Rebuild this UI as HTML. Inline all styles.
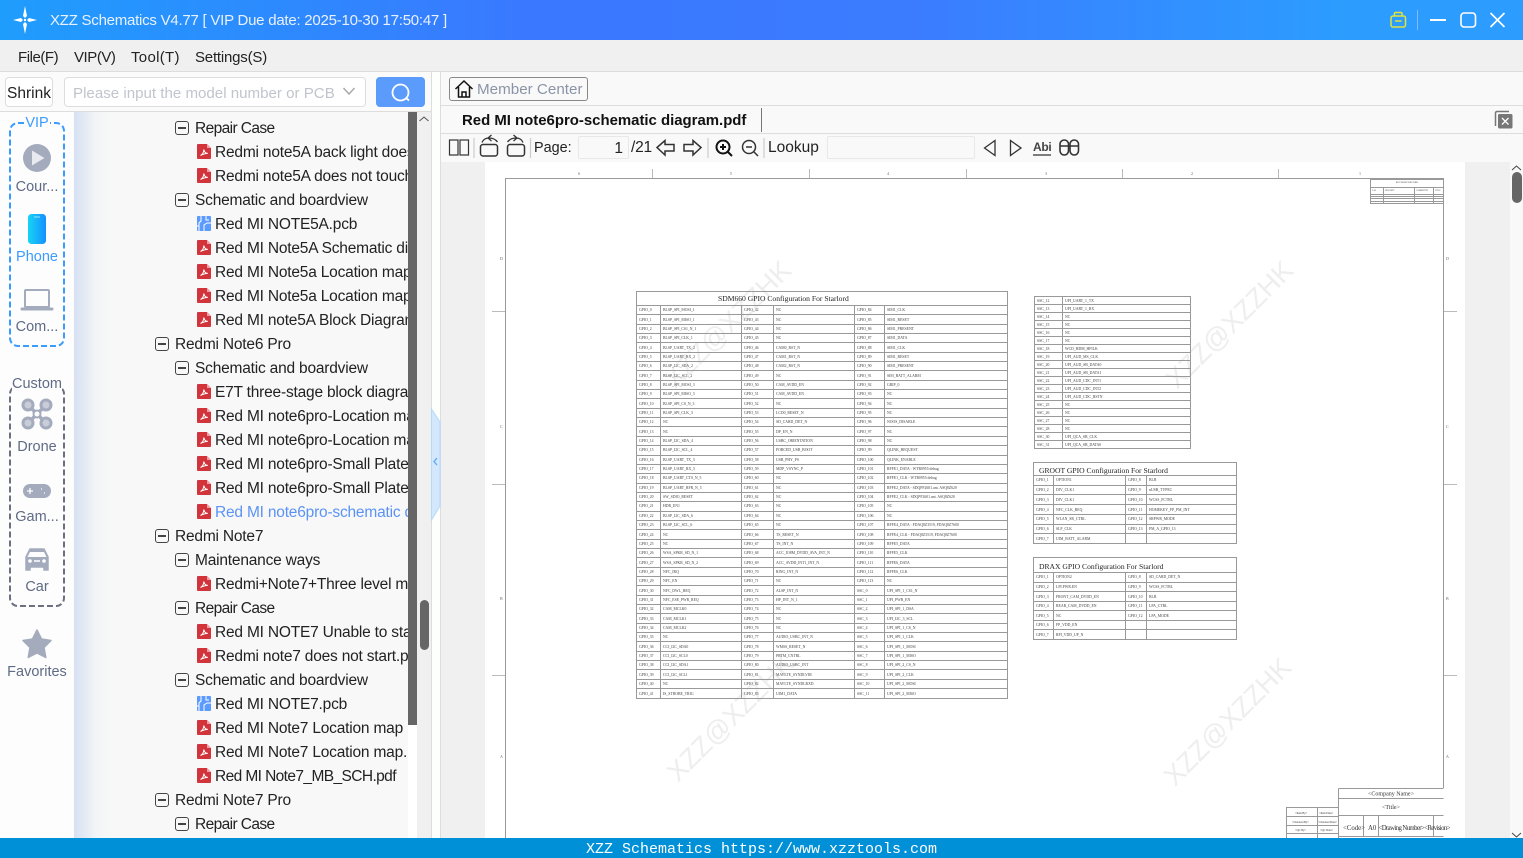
<!DOCTYPE html>
<html><head><meta charset="utf-8"><title>XZZ Schematics</title>
<style>
html,body{margin:0;padding:0;width:1523px;height:858px;overflow:hidden;background:#fff;font-family:"Liberation Sans","Noto Sans CJK SC",sans-serif;color:#222}
.a{position:absolute}
#title{left:0;top:0;width:1523px;height:40px;background:linear-gradient(90deg,#1f9dfd 0,#3a78ff 35%,#3b7cff 60%,#2c9cff 88%,#2c9cff 100%)}
#title span{position:absolute;left:50px;top:12px;color:#e8f1ff;font-size:15px;letter-spacing:-.24px;white-space:nowrap}
#menu{left:0;top:40px;width:1523px;height:31px;background:#f0f0f0;border-bottom:1px solid #ddd}
#menu span{position:absolute;top:9px;font-size:15px;color:#222}
#tree{left:74px;top:113px;width:334px;height:725px;overflow:hidden}
.r{position:absolute;height:24px;line-height:24px;font-size:15.5px;letter-spacing:-.2px;white-space:nowrap;color:#222;margin-top:1px}
.s{position:absolute;width:12px;height:12px;border:1.3px solid #444;border-radius:3px;box-sizing:content-box}
.s:after{content:"";position:absolute;left:2px;right:2px;top:5.4px;height:1.3px;background:#444}
.lab{position:absolute;width:74px;left:0;text-align:center;font-size:14.5px;color:#5f6b85;white-space:nowrap}
table{position:absolute;border-collapse:collapse;table-layout:fixed;font-family:"Liberation Serif",serif;font-size:3.8px;color:#444;background:#fff;filter:blur(.25px)}
td{border:1px solid #999;padding:2px 0 0 2px;white-space:nowrap;overflow:hidden;line-height:1}
td.t{font-size:7.6px;color:#222;text-align:left;padding:3px 0 0 5px}
</style></head><body>
<div class="a" id="title">
<svg class="a" style="left:10px;top:5px" width="30" height="30" viewBox="0 0 30 30"><path d="M15 1 L17 11 L15 13 L13 11Z M15 29 L17 19 L15 17 L13 19Z M3 15 L11 13 L13 15 L11 17Z M27 15 L19 13 L17 15 L19 17Z" fill="#fff"/><circle cx="15" cy="15" r="1.2" fill="#fff"/></svg>
<span>XZZ Schematics V4.77 [ VIP Due date: 2025-10-30 17:50:47 ]</span>
<svg class="a" style="left:1380px;top:0" width="143" height="40" fill="none"><rect x="11" y="16" width="14.5" height="11" rx="2" stroke="#e2e23a" stroke-width="1.5"/><path d="M14.5 16v-2.5a1 1 0 0 1 1-1h5.500a1 1 0 0 1 1 1V16M15 21h6.500" stroke="#e2e23a" stroke-width="1.500"/><path d="M37.500 10v20" stroke="#7fbcff"/><path d="M50 20h16" stroke="#fff" stroke-width="2"/><rect x="81" y="13" width="14.500" height="14" rx="3" stroke="#fff" stroke-width="1.600"/><path d="M110.500 13l14 14M124.500 13l-14 14" stroke="#fff" stroke-width="1.600"/></svg>
</div>
<div class="a" id="menu"><span style="left:18px;letter-spacing:-.45px">File(F)</span><span style="left:74px;letter-spacing:-.45px">VIP(V)</span><span style="left:131px;letter-spacing:.3px">Tool(T)</span><span style="left:195px;letter-spacing:-.2px">Settings(S)</span></div>

<!-- search row -->
<div class="a" style="left:0;top:72px;width:431px;height:39px;background:#fbfbfb;border-bottom:1px solid #ddd"></div>
<div class="a" style="left:5px;top:77px;width:46px;height:28px;border:1px solid #ddd;border-radius:4px;background:#fff;font-size:15.500px;line-height:31px;text-align:center">Shrink</div>
<div class="a" style="left:64px;top:77px;width:300px;height:28px;border:1px solid #ddd;border-radius:4px;background:#fff;font-size:15.100px;line-height:31px;color:#c0c4cc;text-indent:8px;white-space:nowrap">Please input the model number or PCB</div>
<svg class="a" style="left:340px;top:85px" width="18" height="14" fill="none"><path d="M3.500 3l5.500 6 5.500-6" stroke="#aaa" stroke-width="1.500"/></svg>
<div class="a" style="left:376px;top:77px;width:49px;height:30px;background:#5a9bfb;border-radius:4px"></div>
<svg class="a" style="left:376px;top:77px" width="49" height="30" fill="none"><circle cx="24.500" cy="15.500" r="8" stroke="#fff" stroke-width="1.800"/><path d="M30 21l3 2.500" stroke="#fff" stroke-width="1.800"/></svg>

<!-- sidebar -->
<div class="a" style="left:0;top:112px;width:74px;height:726px;background:#fdfdfd"></div>
<svg class="a" style="left:0;top:112px" width="74" height="726" fill="none">
<rect x="10" y="11" width="54" height="223" rx="8" stroke="#3a9cff" stroke-width="2" stroke-dasharray="6 3"/>
<rect x="10" y="274" width="54" height="220" rx="8" stroke="#6b7080" stroke-width="2" stroke-dasharray="6 3"/>
<circle cx="37" cy="46" r="14" fill="#a3abbd"/><path d="M32 38.500v15l12.500-7.500z" fill="#e8eaef"/>
<defs><linearGradient id="ph" x1="0" x2="1"><stop offset="0" stop-color="#17d4f5"/><stop offset="1" stop-color="#1490ff"/></linearGradient></defs>
<rect x="28" y="102" width="18" height="30" rx="3.500" fill="url(#ph)"/><path d="M34 105h6" stroke="#9de6ff"/>
<rect x="25" y="178" width="24" height="17" rx="1" stroke="#a3abbd" stroke-width="2"/><path d="M22 197h30" stroke="#a3abbd" stroke-width="3" stroke-linecap="round"/>
<path d="M28 293l18 18M46 293l-18 18" stroke="#a3abbd" stroke-width="3.500"/>
<circle cx="28" cy="293" r="5" fill="#c9cdd8" stroke="#a3abbd" stroke-width="3"/><circle cx="46" cy="293" r="5" fill="#c9cdd8" stroke="#a3abbd" stroke-width="3"/><circle cx="28" cy="311" r="5" fill="#c9cdd8" stroke="#a3abbd" stroke-width="3"/><circle cx="46" cy="311" r="5" fill="#c9cdd8" stroke="#a3abbd" stroke-width="3"/><circle cx="37" cy="302" r="3.500" fill="#fff" stroke="#a3abbd" stroke-width="2"/>
<rect x="23" y="372" width="28" height="14" rx="7" fill="#a3abbd"/><path d="M27 379h6M30 376v6M41 377h1M44 381h1" stroke="#fff" stroke-width="1.300"/>
<path d="M30 437h14l4 8v13h-4v-3H30v3h-4v-13z" fill="#a3abbd" stroke="#a3abbd" stroke-width="1.500" stroke-linejoin="round"/><path d="M30 440h14l2.500 5h-19z" fill="#fdfdfd"/><circle cx="30" cy="449" r="1.800" fill="#fff"/><circle cx="44" cy="449" r="1.800" fill="#fff"/><path d="M34 449h6" stroke="#fff" stroke-width="1.500"/>
<path d="M37 518l4.500 9 9.500 1.500-7 7 1.800 10L37 541l-8.800 4.500 1.800-10-7-7 9.500-1.500z" fill="#a3abbd" stroke="#a3abbd" stroke-width="1.500" stroke-linejoin="round"/>
</svg>
<div class="lab" style="top:115px;color:#3a9cff"><span style="background:#fdfdfd;padding:0 1px">VIP</span></div>
<div class="lab" style="top:179px">Cour...</div>
<div class="lab" style="top:249px;color:#3a9cff">Phone</div>
<div class="lab" style="top:319px">Com...</div>
<div class="lab" style="top:376px"><span style="background:#fdfdfd">Custom</span></div>
<div class="lab" style="top:439px">Drone</div>
<div class="lab" style="top:509px">Gam...</div>
<div class="lab" style="top:579px">Car</div>
<div class="lab" style="top:664px">Favorites</div>

<!-- tree -->
<div class="a" style="left:74px;top:112px;width:334px;height:726px;background:linear-gradient(90deg,#d6e1f2 0,#f3f4f6 22px,#f8f8f8 40px)"></div>
<div class="a" id="tree">
<svg width="0" height="0" style="position:absolute"><defs>
<g id="pdf"><path d="M1 0h9l4 4v10a1 1 0 0 1-1 1H1a1 1 0 0 1-1-1V1a1 1 0 0 1 1-1z" fill="#d2343c"/><path d="M10 0v4h4z" fill="#f0a0a4"/><path d="M3.500 11.500c2-1 3.200-3.500 3.300-6 .5 2.500 2 3.800 4 3.900-2.700.1-5 .8-7.300 2.100z" fill="none" stroke="#fff" stroke-width="1"/></g>
<g id="pcb"><rect width="14" height="15" rx="1" fill="#5b9bff"/><path d="M4 0v5l-2 2v8M9 0v4h3M7 15V9l3-2h4M0 10h2" stroke="#fff" fill="none" stroke-width="1"/></g>
</defs></svg>
<div class="s" style="left:101px;top:8px"></div><div class="r" style="left:121px;top:3px;letter-spacing:-.6px">Repair Case</div>
<svg class="a" style="left:123px;top:31px" width="14" height="15"><use href="#pdf"/></svg><div class="r" style="left:141px;top:27px">Redmi note5A back light doesn't work</div>
<svg class="a" style="left:123px;top:55px" width="14" height="15"><use href="#pdf"/></svg><div class="r" style="left:141px;top:51px">Redmi note5A does not touch screen</div>
<div class="s" style="left:101px;top:80px"></div><div class="r" style="left:121px;top:75px">Schematic and boardview</div>
<svg class="a" style="left:123px;top:103px" width="14" height="15"><use href="#pcb"/></svg><div class="r" style="left:141px;top:99px">Red MI NOTE5A.pcb</div>
<svg class="a" style="left:123px;top:127px" width="14" height="15"><use href="#pdf"/></svg><div class="r" style="left:141px;top:123px">Red MI Note5A Schematic diagram.pdf</div>
<svg class="a" style="left:123px;top:151px" width="14" height="15"><use href="#pdf"/></svg><div class="r" style="left:141px;top:147px">Red MI Note5a Location map top.pdf</div>
<svg class="a" style="left:123px;top:175px" width="14" height="15"><use href="#pdf"/></svg><div class="r" style="left:141px;top:171px">Red MI Note5a Location map bot.pdf</div>
<svg class="a" style="left:123px;top:199px" width="14" height="15"><use href="#pdf"/></svg><div class="r" style="left:141px;top:195px">Red MI note5A Block Diagram.pdf</div>
<div class="s" style="left:81px;top:224px"></div><div class="r" style="left:101px;top:219px">Redmi Note6 Pro</div>
<div class="s" style="left:101px;top:248px"></div><div class="r" style="left:121px;top:243px">Schematic and boardview</div>
<svg class="a" style="left:123px;top:271px" width="14" height="15"><use href="#pdf"/></svg><div class="r" style="left:141px;top:267px">E7T three-stage block diagram.pdf</div>
<svg class="a" style="left:123px;top:295px" width="14" height="15"><use href="#pdf"/></svg><div class="r" style="left:141px;top:291px">Red MI note6pro-Location map.pdf</div>
<svg class="a" style="left:123px;top:319px" width="14" height="15"><use href="#pdf"/></svg><div class="r" style="left:141px;top:315px">Red MI note6pro-Location map.pdf</div>
<svg class="a" style="left:123px;top:343px" width="14" height="15"><use href="#pdf"/></svg><div class="r" style="left:141px;top:339px">Red MI note6pro-Small Plate.pdf</div>
<svg class="a" style="left:123px;top:367px" width="14" height="15"><use href="#pdf"/></svg><div class="r" style="left:141px;top:363px">Red MI note6pro-Small Plate.pdf</div>
<svg class="a" style="left:123px;top:391px" width="14" height="15"><use href="#pdf"/></svg><div class="r" style="left:141px;top:387px;color:#5b93f5">Red MI note6pro-schematic diagram.pdf</div>
<div class="s" style="left:81px;top:416px"></div><div class="r" style="left:101px;top:411px">Redmi Note7</div>
<div class="s" style="left:101px;top:440px"></div><div class="r" style="left:121px;top:435px">Maintenance ways</div>
<svg class="a" style="left:123px;top:463px" width="14" height="15"><use href="#pdf"/></svg><div class="r" style="left:141px;top:459px">Redmi+Note7+Three level maintenance</div>
<div class="s" style="left:101px;top:488px"></div><div class="r" style="left:121px;top:483px;letter-spacing:-.6px">Repair Case</div>
<svg class="a" style="left:123px;top:511px" width="14" height="15"><use href="#pdf"/></svg><div class="r" style="left:141px;top:507px">Red MI NOTE7 Unable to start up</div>
<svg class="a" style="left:123px;top:535px" width="14" height="15"><use href="#pdf"/></svg><div class="r" style="left:141px;top:531px">Redmi note7 does not start.pdf</div>
<div class="s" style="left:101px;top:560px"></div><div class="r" style="left:121px;top:555px">Schematic and boardview</div>
<svg class="a" style="left:123px;top:583px" width="14" height="15"><use href="#pcb"/></svg><div class="r" style="left:141px;top:579px">Red MI NOTE7.pcb</div>
<svg class="a" style="left:123px;top:607px" width="14" height="15"><use href="#pdf"/></svg><div class="r" style="left:141px;top:603px">Red MI Note7 Location map</div>
<svg class="a" style="left:123px;top:631px" width="14" height="15"><use href="#pdf"/></svg><div class="r" style="left:141px;top:627px">Red MI Note7 Location map.</div>
<svg class="a" style="left:123px;top:655px" width="14" height="15"><use href="#pdf"/></svg><div class="r" style="left:141px;top:651px;letter-spacing:-.6px">Red MI Note7_MB_SCH.pdf</div>
<div class="s" style="left:81px;top:680px"></div><div class="r" style="left:101px;top:675px">Redmi Note7 Pro</div>
<div class="s" style="left:101px;top:704px"></div><div class="r" style="left:121px;top:699px;letter-spacing:-.6px">Repair Case</div>
</div>
<!-- tree scrollbars -->
<div class="a" style="left:408px;top:112px;width:9px;height:613px;background:#666"></div>
<div class="a" style="left:417px;top:112px;width:14px;height:726px;background:#f0f0f0"></div>
<div class="a" style="left:420px;top:600px;width:9px;height:50px;border-radius:5px;background:#666"></div>
<svg class="a" style="left:418px;top:114px" width="12" height="10" fill="none"><path d="M1.500 7l4.500-4 4.500 4" stroke="#555"/></svg>
<div class="a" style="left:431px;top:72px;width:1px;height:766px;background:#ddd"></div>
<div class="a" style="left:432px;top:72px;width:8px;height:766px;background:#fdfffd"></div>
<div class="a" style="left:440px;top:72px;width:1px;height:766px;background:#ddd"></div>
<svg class="a" style="left:431px;top:408px" width="10" height="114"><path d="M0.500 1L9 14V98L0.500 112z" fill="#d3e8fd" stroke="#b5d8fb"/><path d="M6 50l-3 3.500 3 3.500" fill="none" stroke="#5ba8f5" stroke-width="1.300"/></svg>

<!-- right panel -->
<div class="a" style="left:441px;top:72px;width:1082px;height:33px;background:#f9f9f9;border-bottom:1px solid #ddd"></div>
<div class="a" style="left:441px;top:106px;width:1082px;height:27px;background:#f9f9f9;border-bottom:1px solid #ddd"></div>
<div class="a" style="left:441px;top:134px;width:1082px;height:28px;background:#f9f9f9"></div>
<div class="a" style="left:449px;top:77px;width:137px;height:22px;border:1px solid #888;border-radius:3px"></div>
<svg class="a" style="left:454px;top:79px" width="20" height="20" fill="none" stroke="#111" stroke-width="1.500"><path d="M1.500 10L10 2l8.500 8M4.500 8v10h11V8M8 18v-5h4v5"/></svg>
<div class="a" style="left:477px;top:81px;font-size:15.200px;color:#8a94a6;white-space:nowrap">Member Center</div>
<div class="a" style="left:462px;top:112px;font-size:14.930px;font-weight:bold;color:#111;white-space:nowrap">Red MI note6pro-schematic diagram.pdf</div>
<div class="a" style="left:761px;top:108px;width:1px;height:24px;background:#777"></div>
<svg class="a" style="left:1494px;top:110px" width="20" height="20" fill="none"><path d="M1.500 16V3a1.500 1.500 0 0 1 1.500-1.500h12" stroke="#777" stroke-width="1.500"/><rect x="4" y="4" width="14.500" height="14.500" rx="1.500" fill="#777"/><path d="M8 8l6.500 6.500M14.500 8L8 14.500" stroke="#fff" stroke-width="1.300"/></svg>
<!-- toolbar -->
<svg class="a" style="left:441px;top:134px" width="650" height="28" fill="none" stroke="#333" stroke-width="1.200">
<rect x="8.500" y="6" width="8.500" height="15"/><rect x="19" y="6" width="8.500" height="15"/>
<path d="M33 4v20M89.500 4v20M267 4v20M323 4v20" stroke="#ccc"/>
<rect x="39.500" y="10.500" width="17" height="11.500" rx="2.500" stroke-width="1.500"/><path d="M41 8.500c1.200-3 3.500-4.500 7-4.500c3.500 0 6.500 1.200 8.500 4M50.500 1l-3.500 3 3.500 3" stroke-width="1.300"/>
<rect x="66.500" y="10.500" width="17" height="11.500" rx="2.500" stroke-width="1.500"/><path d="M82 8.500c-1.200-3-3.500-4.500-7-4.500c-3.500 0-6.500 1.200-8.500 4M72.500 1l3.500 3-3.500 3" stroke-width="1.300"/>
<path d="M216 13.500l8-7v4h9v6.500h-9v4z" stroke-width="1.500"/><path d="M260 13.500l-8-7v4h-9v6.500h9v4z" stroke-width="1.500"/>
<circle cx="282" cy="13" r="6.500" stroke="#111" stroke-width="2"/><path d="M287 18l4 4M279 13h6M282 10v6" stroke="#111" stroke-width="2"/>
<circle cx="308" cy="13" r="6.500" stroke-width="1.500"/><path d="M313 18l4 4M305 13h6" stroke-width="1.500"/>
<path d="M554 6.500l-10.500 7.500 10.500 7.500zM569.500 6.500l10.500 7.500-10.500 7.500z" stroke-width="1.300"/>
<path d="M592 21h18" stroke-width="1.200"/>
<rect x="619" y="6" width="8.500" height="15" rx="4.250" stroke-width="1.600"/><rect x="629" y="6" width="8.500" height="15" rx="4.250" stroke-width="1.600"/><path d="M619 12h18.500" stroke-width="1.600"/>
</svg>
<div class="a" style="left:534px;top:140px;font-size:14.400px;white-space:nowrap">Page:</div>
<div class="a" style="left:578px;top:136px;width:49px;height:21px;border:1px solid #e8e8e8;border-radius:2px;font-size:15.500px;line-height:23px;text-align:right;box-sizing:content-box"><span style="padding-right:5px">1</span></div>
<div class="a" style="left:631px;top:139px;font-size:15.500px;letter-spacing:-.2px">/21</div>
<div class="a" style="left:768px;top:139px;font-size:15.500px">Lookup</div>
<div class="a" style="left:827px;top:136px;width:146px;height:21px;border:1px solid #e8e8e8;border-radius:2px"></div>
<div class="a" style="left:1033px;top:140px;font-size:12px;font-weight:bold;color:#444;letter-spacing:-.3px">Abi</div>

<!-- document view -->
<div class="a" style="left:441px;top:162px;width:1069px;height:676px;background:#f0f0f0"></div>
<div class="a" style="left:1510px;top:162px;width:13px;height:676px;background:#f9f9f9"></div>
<div class="a" style="left:1512px;top:172px;width:10px;height:31px;border-radius:5px;background:#666"></div>
<svg class="a" style="left:1510px;top:164px" width="13" height="8" fill="none"><path d="M2 6l4.500-4 4.500 4" stroke="#444"/></svg>
<svg class="a" style="left:1510px;top:832px" width="13" height="6" fill="none"><path d="M2 1l4.500 4 4.500-4" stroke="#444"/></svg>
<div class="a" style="left:485px;top:162px;width:980px;height:676px;background:#fff;overflow:hidden">
<svg class="a" style="left:0;top:0" width="980" height="676" fill="none">
<path d="M21 16.500H958.500M20.500 16V676M958.500 16V676" stroke="#999"/>
<path d="M167.500 7v9M324.500 7v9M481.500 7v9M637.500 7v9M793.500 7v9M7 149.500h13M7 322.500h13M7 513.500h13M959 149.500h13M959 322.500h13M959 513.500h13" stroke="#bbb"/>
<g font-family="Liberation Serif,serif" font-size="4" fill="#666" stroke="none"><text x="93" y="13">6</text><text x="245" y="13">5</text><text x="402" y="13">4</text><text x="560" y="13">3</text><text x="706" y="13">2</text><text x="874" y="13">1</text><text x="15" y="98">D</text><text x="15" y="266">C</text><text x="15" y="438">B</text><text x="15" y="596">A</text><text x="961" y="98">D</text><text x="961" y="266">C</text><text x="961" y="438">B</text><text x="961" y="596">A</text></g>
<g font-family="Liberation Sans,sans-serif" font-size="27" fill="#eeeeee" stroke="none"><text transform="translate(190 228) rotate(-45)">XZZ@XZZHK</text><text transform="translate(692 228) rotate(-45)">XZZ@XZZHK</text><text transform="translate(193 621) rotate(-45)">XZZ@XZZHK</text><text transform="translate(690 625) rotate(-45)">XZZ@XZZHK</text></g>
</svg>
<table style="left:151px;top:129px;width:371px;height:408px;background:transparent"><colgroup><col style="width:24px"><col style="width:81px"><col style="width:32px"><col style="width:81px"><col style="width:30px"><col style="width:123px"></colgroup>
<tr style="height:14px"><td class="t" colspan="6" style="padding:1px 0 0 81px">SDM660 GPIO Configuration For Starlord</td></tr>
<tr><td>GPIO_0<td>BLSP_SPI_MOSI_1<td>GPIO_42<td>NC<td>GPIO_84<td>SIM1_CLK</tr>
<tr><td>GPIO_1<td>BLSP_SPI_MISO_1<td>GPIO_43<td>NC<td>GPIO_85<td>SIM1_RESET</tr>
<tr><td>GPIO_2<td>BLSP_SPI_CS1_N_1<td>GPIO_44<td>NC<td>GPIO_86<td>SIM1_PRESENT</tr>
<tr><td>GPIO_3<td>BLSP_SPI_CLK_1<td>GPIO_45<td>NC<td>GPIO_87<td>SIM1_DATA</tr>
<tr><td>GPIO_4<td>BLSP_UART_TX_2<td>GPIO_46<td>CAM0_RST_N<td>GPIO_88<td>SIM1_CLK</tr>
<tr><td>GPIO_5<td>BLSP_UART_RX_2<td>GPIO_47<td>CAM1_RST_N<td>GPIO_89<td>SIM1_RESET</tr>
<tr><td>GPIO_6<td>BLSP_I2C_SDA_2<td>GPIO_48<td>CAM2_RST_N<td>GPIO_90<td>SIM1_PRESENT</tr>
<tr><td>GPIO_7<td>BLSP_I2C_SCL_2<td>GPIO_49<td>NC<td>GPIO_91<td>SIM_BATT_ALARM</tr>
<tr><td>GPIO_8<td>BLSP_SPI_MOSI_3<td>GPIO_50<td>CAM_AVDD_EN<td>GPIO_92<td>GRIP_0</tr>
<tr><td>GPIO_9<td>BLSP_SPI_MISO_3<td>GPIO_51<td>CAM_AVDD_EN<td>GPIO_93<td>NC</tr>
<tr><td>GPIO_10<td>BLSP_SPI_CS_N_3<td>GPIO_52<td>NC<td>GPIO_94<td>NC</tr>
<tr><td>GPIO_11<td>BLSP_SPI_CLK_3<td>GPIO_53<td>LCD0_RESET_N<td>GPIO_95<td>NC</tr>
<tr><td>GPIO_12<td>NC<td>GPIO_54<td>SD_CARD_DET_N<td>GPIO_96<td>NOOS_DISABLE</tr>
<tr><td>GPIO_13<td>NC<td>GPIO_55<td>DP_EN_N<td>GPIO_97<td>NC</tr>
<tr><td>GPIO_14<td>BLSP_I2C_SDA_4<td>GPIO_56<td>USBC_ORIENTATION<td>GPIO_98<td>NC</tr>
<tr><td>GPIO_15<td>BLSP_I2C_SCL_4<td>GPIO_57<td>FORCED_USB_BOOT<td>GPIO_99<td>QLINK_REQUEST</tr>
<tr><td>GPIO_16<td>BLSP_UART_TX_5<td>GPIO_58<td>USB_PHY_PS<td>GPIO_100<td>QLINK_ENABLE</tr>
<tr><td>GPIO_17<td>BLSP_UART_RX_5<td>GPIO_59<td>MDP_VSYNC_P<td>GPIO_101<td>RFFE1_DATA - WTR0955 debug</tr>
<tr><td>GPIO_18<td>BLSP_UART_CTS_N_5<td>GPIO_60<td>NC<td>GPIO_102<td>RFFE1_CLK - WTR0955 debug</tr>
<tr><td>GPIO_19<td>BLSP_UART_RFR_N_5<td>GPIO_61<td>NC<td>GPIO_103<td>RFFE2_DATA - SDQPF2601.ant. ASQ8Z620</tr>
<tr><td>GPIO_20<td>SW_SDIO_RESET<td>GPIO_62<td>NC<td>GPIO_104<td>RFFE2_CLK - SDQPF2601.ant. ASQ8Z620</tr>
<tr><td>GPIO_21<td>HDR_EN1<td>GPIO_63<td>NC<td>GPIO_105<td>NC</tr>
<tr><td>GPIO_22<td>BLSP_I2C_SDA_6<td>GPIO_64<td>NC<td>GPIO_106<td>NC</tr>
<tr><td>GPIO_23<td>BLSP_I2C_SCL_6<td>GPIO_65<td>NC<td>GPIO_107<td>RFFE4_DATA - FDAQ8Z3519, FDAQ8Z7600</tr>
<tr><td>GPIO_24<td>NC<td>GPIO_66<td>TS_RESET_N<td>GPIO_108<td>RFFE4_CLK - FDAQ8Z3519, FDAQ8Z7600</tr>
<tr><td>GPIO_25<td>NC<td>GPIO_67<td>TS_INT_N<td>GPIO_109<td>RFFE5_DATA</tr>
<tr><td>GPIO_26<td>WSA_SPKR_SD_N_1<td>GPIO_68<td>ACC_IO8M_DVDD_AVA_INT_N<td>GPIO_110<td>RFFE5_CLK</tr>
<tr><td>GPIO_27<td>WSA_SPKR_SD_N_2<td>GPIO_69<td>ACC_AVDD_INT1_INT_N<td>GPIO_111<td>RFFE6_DATA</tr>
<tr><td>GPIO_28<td>NFC_IRQ<td>GPIO_70<td>RING_INT_N<td>GPIO_112<td>RFFE6_CLK</tr>
<tr><td>GPIO_29<td>NFC_EN<td>GPIO_71<td>NC<td>GPIO_113<td>NC</tr>
<tr><td>GPIO_30<td>NFC_DWL_REQ<td>GPIO_72<td>ALSP_INT_N<td>SSC_0<td>UPI_SPI_1_CS1_N</tr>
<tr><td>GPIO_31<td>NFC_ESE_PWR_REQ<td>GPIO_73<td>HP_INT_N_1<td>SSC_1<td>UPI_PWR_EN</tr>
<tr><td>GPIO_32<td>CAM_MCLK0<td>GPIO_74<td>NC<td>SSC_2<td>UPI_SPI_1_DSA</tr>
<tr><td>GPIO_33<td>CAM_MCLK1<td>GPIO_75<td>NC<td>SSC_3<td>UPI_I2C_3_SCL</tr>
<tr><td>GPIO_34<td>CAM_MCLK2<td>GPIO_76<td>NC<td>SSC_4<td>UPI_SPI_1_CS_N</tr>
<tr><td>GPIO_35<td>NC<td>GPIO_77<td>AUDIO_USBC_INT_N<td>SSC_5<td>UPI_SPI_1_CLK</tr>
<tr><td>GPIO_36<td>CCI_I2C_SDA0<td>GPIO_78<td>WMSS_RESET_N<td>SSC_6<td>UPI_SPI_1_MOSI</tr>
<tr><td>GPIO_37<td>CCI_I2C_SCL0<td>GPIO_79<td>PRTM_CNTRL<td>SSC_7<td>UPI_SPI_1_MISO</tr>
<tr><td>GPIO_38<td>CCI_I2C_SDA1<td>GPIO_80<td>AUDIO_USBC_INT<td>SSC_8<td>UPI_SPI_2_CS_N</tr>
<tr><td>GPIO_39<td>CCI_I2C_SCL1<td>GPIO_81<td>MAVLTE_SYNDLVIR<td>SSC_9<td>UPI_SPI_2_CLK</tr>
<tr><td>GPIO_40<td>NC<td>GPIO_82<td>MAVLTE_SYNDLRXD<td>SSC_10<td>UPI_SPI_2_MOSI</tr>
<tr><td>GPIO_41<td>IS_STROBE_TRIG<td>GPIO_83<td>UIM1_DATA<td>SSC_11<td>UPI_SPI_2_MISO</tr>
</table>
<table style="left:549px;top:134px;width:156px;height:153px;background:transparent"><colgroup><col style="width:28px"><col style="width:128px"></colgroup>
<tr><td>SSC_12<td>UPI_UART_1_TX</tr><tr><td>SSC_13<td>UPI_UART_1_RX</tr><tr><td>SSC_14<td>NC</tr><tr><td>SSC_15<td>NC</tr><tr><td>SSC_16<td>NC</tr><tr><td>SSC_17<td>NC</tr><tr><td>SSC_18<td>WCD_HDM_HFILK</tr><tr><td>SSC_19<td>UPI_AUD_MS_CLK</tr><tr><td>SSC_20<td>UPI_AUD_SB_DATA0</tr><tr><td>SSC_21<td>UPI_AUD_SB_DATA1</tr><tr><td>SSC_22<td>UPI_AUD_CDC_INT1</tr><tr><td>SSC_23<td>UPI_AUD_CDC_INT2</tr><tr><td>SSC_24<td>UPI_AUD_CDC_RSTN</tr><tr><td>SSC_25<td>NC</tr><tr><td>SSC_26<td>NC</tr><tr><td>SSC_27<td>NC</tr><tr><td>SSC_28<td>NC</tr><tr><td>SSC_30<td>UPI_QCA_SB_CLK</tr><tr><td>SSC_31<td>UPI_QCA_SB_DATA0</tr>
</table>
<table style="left:548px;top:300px;width:203px;height:82px;background:#fff"><colgroup><col style="width:20px"><col style="width:72px"><col style="width:21px"><col style="width:90px"></colgroup>
<tr style="height:13px"><td class="t" colspan="4">GROOT GPIO Configuration For Starlord</td></tr>
<tr><td>GPIO_1<td>OPTION1<td>GPIO_8<td>BLB</tr><tr><td>GPIO_2<td>DIV_CLK1<td>GPIO_9<td>nUSB_TYPEC</tr><tr><td>GPIO_3<td>DIV_CLK1<td>GPIO_10<td>WCSS_FCTRL</tr><tr><td>GPIO_4<td>NFC_CLK_REQ<td>GPIO_11<td>HOMEKEY_FP_PM_INT</tr><tr><td>GPIO_5<td>WLAN_SR_CTRL<td>GPIO_12<td>SRPWR_MODE</tr><tr><td>GPIO_6<td>SLP_CLK<td>GPIO_13<td>PM_A_GPIO_13</tr><tr><td>GPIO_7<td>UIM_BATT_ALARM<td><td></tr>
</table>
<table style="left:548px;top:395px;width:203px;height:83px;background:#fff"><colgroup><col style="width:20px"><col style="width:72px"><col style="width:21px"><col style="width:90px"></colgroup>
<tr style="height:15px"><td class="t" colspan="4">DRAX GPIO Configuration For Starlord</td></tr>
<tr><td>GPIO_1<td>OPTION2<td>GPIO_8<td>SD_CARD_DET_N</tr><tr><td>GPIO_2<td>LPI.PWR.EN<td>GPIO_9<td>WCSS_FCTRL</tr><tr><td>GPIO_3<td>FRONT_CAM_DVDD_EN<td>GPIO_10<td>BLB</tr><tr><td>GPIO_4<td>REAR_CAM_DVDD_EN<td>GPIO_11<td>LPA_CTRL</tr><tr><td>GPIO_5<td>NC<td>GPIO_12<td>LPA_MODE</tr><tr><td>GPIO_6<td>FP_VDD_EN<td><td></tr><tr><td>GPIO_7<td>RPI_VDD_UP_N<td><td></tr>
</table>
<!-- top right mini block -->
<table style="left:885px;top:17px;width:73px;height:25px"><colgroup><col style="width:13px"><col style="width:31px"><col style="width:19px"><col style="width:10px"></colgroup>
<tr><td colspan="4" style="font-size:2.500px;text-align:center;padding:0">REVISION RECORD</td></tr><tr style="font-size:2px"><td style="padding:0 0 0 1px">LAB<td style="padding:0 0 0 1px">DESCRIPT<td style="padding:0 0 0 1px">COMMITTED<td style="padding:0 0 0 1px">TITLE</tr><tr><td style="padding:0"><td style="padding:0"><td style="padding:0"><td style="padding:0"></tr><tr><td style="padding:0"><td style="padding:0"><td style="padding:0"><td style="padding:0"></tr><tr><td style="padding:0"><td style="padding:0"><td style="padding:0"><td style="padding:0"></tr><tr><td style="padding:0"><td style="padding:0"><td style="padding:0"><td style="padding:0"></tr>
</table>
<!-- title block -->
<svg class="a" style="left:800px;top:626px;filter:blur(.25px)" width="180" height="50" fill="none" stroke="#999">
<rect x="53" y="0" width="106" height="50" fill="#fff" stroke="none"/><rect x="0" y="19" width="53" height="31" fill="#fff" stroke="none"/>
<path d="M53.500 .5H158.500M53.500 10.500H158.500M53.500 27.500H158.500M53.500 48.500H158.500M53.500 .5V50M78.500 27.500V48.500M93.500 27.500V48.500M148.500 27.500V48.500M1 19.500H53.500M1 28.500H53.500M1 37.500H53.500M1 45.500H53.500M1.500 19.500V50M32.500 19.500V50"/>
<g font-family="Liberation Serif,serif" fill="#333" stroke="none" font-size="6"><text x="106" y="7.500" text-anchor="middle">&lt;Company Name&gt;</text><text x="106" y="21" text-anchor="middle">&lt;Title&gt;</text><g font-size="6.800"><text x="58" y="42">&lt;Code&gt;</text><text x="83" y="42">A0</text><text x="93.500" y="42" textLength="72">&lt;Drawing Number&gt;&lt;Revision&gt;</text></g><g font-size="2.800"><text x="10" y="26">&lt;Item By&gt;</text><text x="34" y="26">&lt;Item Date&gt;</text><text x="7" y="35">&lt;Checked By&gt;</text><text x="33" y="35">&lt;Checked Date&gt;</text><text x="10" y="43">&lt;QC By&gt;</text><text x="35" y="43">&lt;QC Date&gt;</text></g></g></svg>
</div>
<!-- footer -->
<div class="a" style="left:-1px;top:838px;width:1525px;height:20px;background:#0090d8;color:#fff;font-family:'Liberation Mono',monospace;font-size:15px;line-height:23px;text-align:center;white-space:nowrap;overflow:hidden">XZZ Schematics https://www.xzztools.com</div>
</body></html>
